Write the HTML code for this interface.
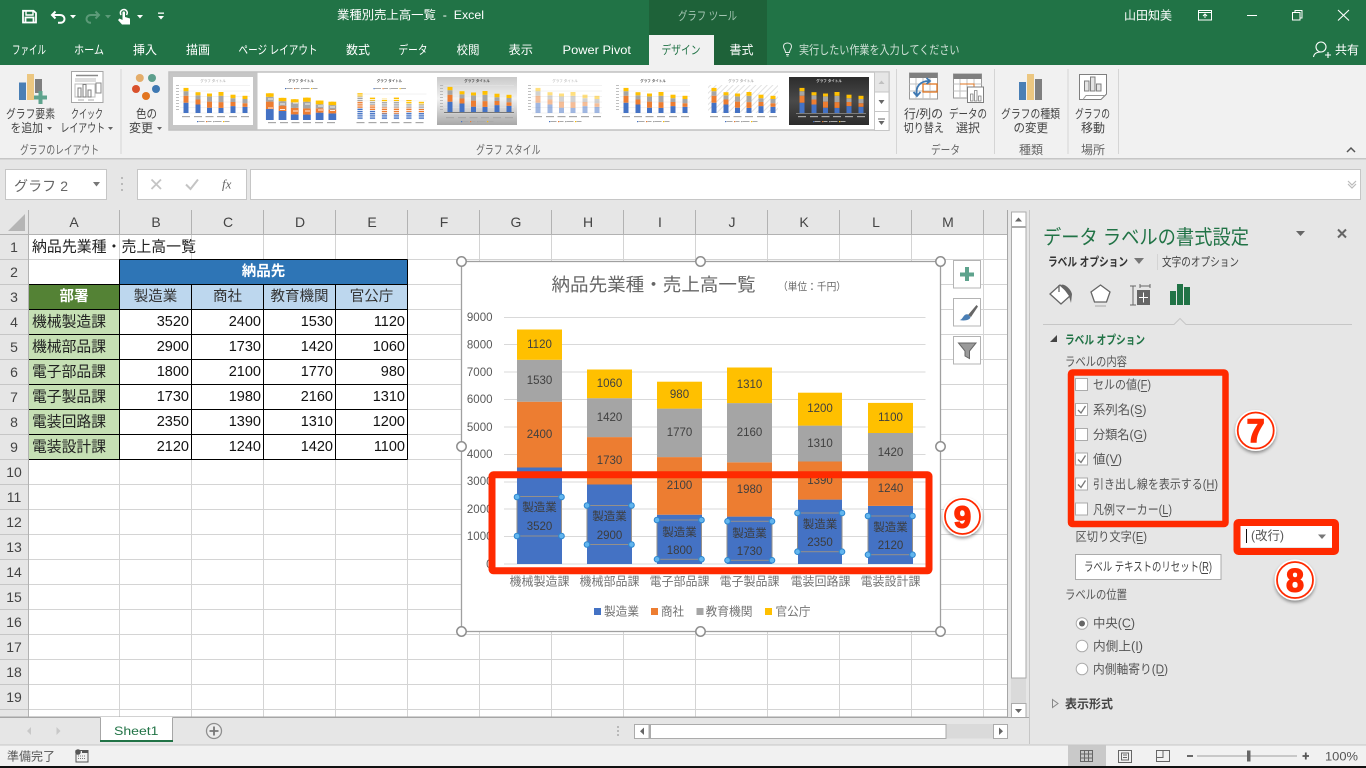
<!DOCTYPE html>
<html lang="ja"><head><meta charset="utf-8"><title>業種別売上高一覧 - Excel</title>
<style>
html,body{margin:0;padding:0;background:#e6e6e6;overflow:hidden}
svg{display:block}
text{font-family:"Liberation Sans","Noto Sans CJK JP",sans-serif;dominant-baseline:central}
.m{text-anchor:middle}.e{text-anchor:end}
</style></head><body>
<svg width="1366" height="768" viewBox="0 0 1366 768" xmlns="http://www.w3.org/2000/svg">
<defs>
<filter id="sh" x="-30%" y="-30%" width="160%" height="170%"><feDropShadow dx="0" dy="2" stdDeviation="1.6" flood-color="#000" flood-opacity=".4"/></filter>
<linearGradient id="gg" x1="0" y1="0" x2="0" y2="1"><stop offset="0" stop-color="#c9c9c9"/><stop offset=".45" stop-color="#f2f2f2"/><stop offset="1" stop-color="#a8a8a8"/></linearGradient>
<linearGradient id="dk" x1="0" y1="0" x2="0" y2="1"><stop offset="0" stop-color="#2c2c2c"/><stop offset=".5" stop-color="#4a4a4a"/><stop offset="1" stop-color="#2c2c2c"/></linearGradient>
<pattern id="hat" width="4" height="4" patternUnits="userSpaceOnUse" patternTransform="rotate(45)"><rect width="4" height="4" fill="#fff"/><rect width="1" height="4" fill="#e2e2e2"/></pattern>
<pattern id="stp" width="4" height="2.200" patternUnits="userSpaceOnUse"><rect width="4" height="2.200" fill="none"/><rect width="4" height=".8" fill="#fff"/></pattern>
<g id="b">
<rect x="10.500" y="25.700" width="5" height="10.300" fill="#4472c4"/><rect x="10.500" y="18.700" width="5" height="7" fill="#ed7d31"/><rect x="10.500" y="14.200" width="5" height="4.500" fill="#a5a5a5"/><rect x="10.500" y="10.900" width="5" height="3.300" fill="#ffc000"/>
<rect x="22.500" y="27.500" width="5" height="8.500" fill="#4472c4"/><rect x="22.500" y="22.500" width="5" height="5" fill="#ed7d31"/><rect x="22.500" y="18.300" width="5" height="4.200" fill="#a5a5a5"/><rect x="22.500" y="15.200" width="5" height="3.100" fill="#ffc000"/>
<rect x="34" y="30.700" width="5" height="5.300" fill="#4472c4"/><rect x="34" y="24.600" width="5" height="6.100" fill="#ed7d31"/><rect x="34" y="19.400" width="5" height="5.200" fill="#a5a5a5"/><rect x="34" y="16.500" width="5" height="2.900" fill="#ffc000"/>
<rect x="45.500" y="30.900" width="5" height="5.100" fill="#4472c4"/><rect x="45.500" y="25.100" width="5" height="5.800" fill="#ed7d31"/><rect x="45.500" y="18.800" width="5" height="6.300" fill="#a5a5a5"/><rect x="45.500" y="15" width="5" height="3.800" fill="#ffc000"/>
<rect x="57.500" y="29.100" width="5" height="6.900" fill="#4472c4"/><rect x="57.500" y="25" width="5" height="4.100" fill="#ed7d31"/><rect x="57.500" y="21.200" width="5" height="3.800" fill="#a5a5a5"/><rect x="57.500" y="17.700" width="5" height="3.500" fill="#ffc000"/>
<rect x="69.500" y="29.800" width="5" height="6.200" fill="#4472c4"/><rect x="69.500" y="26.200" width="5" height="3.600" fill="#ed7d31"/><rect x="69.500" y="22" width="5" height="4.200" fill="#a5a5a5"/><rect x="69.500" y="18.800" width="5" height="3.200" fill="#ffc000"/>
</g>
<g id="gr" stroke="#e6e6e6" stroke-width=".5"><path d="M7 8.500H77M7 14H77M7 19.500H77M7 25H77M7 30.500H77M7 36H77"/><path d="M3 8.500H6M3 11.500H6M3 14.500H6M3 17.500H6M3 20.500H6M3 23.500H6M3 26.500H6M3 29.500H6M3 32.500H6" stroke="#aaa" stroke-width=".8"/></g>
<g id="cl" fill="#a8a8a8"><rect x="9" y="39" width="8" height="1.200"/><rect x="21" y="39" width="8" height="1.200"/><rect x="32.500" y="39" width="8" height="1.200"/><rect x="44" y="39" width="8" height="1.200"/><rect x="56" y="39" width="8" height="1.200"/><rect x="68" y="39" width="8" height="1.200"/></g>
<g id="lg"><rect x="24" y="44" width="1.200" height="1.200" fill="#4472c4"/><rect x="25.500" y="44" width="6" height="1" fill="#aaa"/><rect x="33" y="44" width="1.200" height="1.200" fill="#ed7d31"/><rect x="34.500" y="44" width="4" height="1" fill="#aaa"/><rect x="40" y="44" width="1.200" height="1.200" fill="#a5a5a5"/><rect x="41.500" y="44" width="7" height="1" fill="#aaa"/><rect x="50" y="44" width="1.200" height="1.200" fill="#ffc000"/><rect x="51.500" y="44" width="5" height="1" fill="#aaa"/></g>
<g id="b2"><use href="#b"/><use href="#b" x="2.300"/></g>
</defs>

<!-- Title bar / tabs -->
<rect width="1366" height="65" fill="#217346"/>
<rect x="649" width="118" height="65" fill="#1e6239"/>
<rect x="649" y="35" width="65" height="30" fill="#f1f1f1"/>
<!-- QAT icons -->
<g fill="none" stroke="#fff">
<path d="M23 10.800H33.500L36 13V22.500H23Z" stroke-width="1.800"/>
<path d="M26 11V15H33V11" stroke-width="1.400"/>
<path d="M25.500 22.500V17.500H33.500V22.500" stroke-width="1.800"/>
<path d="M55.500 11.500L52 15L55.500 18.500M52.500 15H60C63 15 64.500 17 64.500 19C64.500 21 63 22.800 60 22.800H58" stroke-width="2"/>
<path d="M95.500 11.500L99 15L95.500 18.500M98.500 15H91C88 15 86.500 17 86.500 19C86.500 21 88 22.800 91 22.800" stroke="#5c9a78" stroke-width="2"/>
<path d="M121 15C119 11 122.500 9.500 124 9.500C126 9.500 128.500 12 126.500 15" stroke-width="1.500"/>
</g>
<path d="M122.500 12.500C122.500 11 125 11 125 12.500V17L130 18.500V24.500H122L118 20L119.500 18.500L122.500 20Z" fill="#fff"/>
<g fill="#fff"><path d="M70 15H76L73 18.500Z"/><path d="M137 15H143L140 18.500Z"/><rect x="158" y="12.500" width="6" height="1.300"/><path d="M158 16H164L161 19.500Z"/></g>
<path d="M105 15H111L108 18.500Z" fill="#5c9a78"/>
<text x="337" y="15" font-size="12" fill="#fff" textLength="147" lengthAdjust="spacingAndGlyphs" xml:space="preserve">業種別売上高一覧  -  Excel</text>
<text x="678" y="16" font-size="12" fill="#a4c5b2" textLength="59" lengthAdjust="spacingAndGlyphs">グラフ ツール</text>
<text x="1124" y="15.500" font-size="12" fill="#fff" textLength="48" lengthAdjust="spacingAndGlyphs">山田知美</text>
<g fill="none" stroke="#fff" stroke-width="1">
<rect x="1198.500" y="10.500" width="13" height="9.500"/><path d="M1198.500 12.500H1211.500M1205 18V14M1203 16L1205 14L1207 16"/>
<path d="M1247 15.500H1257"/>
<path d="M1292.500 12.500H1300V20H1292.500ZM1295 12.500V10.500H1302V18H1300"/>
<path d="M1338 10L1349 20.500M1349 10L1338 20.500" stroke-width="1.100"/>
</g>
<g font-size="12" fill="#fff">
<text x="12" y="50" textLength="34" lengthAdjust="spacingAndGlyphs">ファイル</text>
<text x="74" y="50" textLength="30" lengthAdjust="spacingAndGlyphs">ホーム</text>
<text x="133" y="50" textLength="24" lengthAdjust="spacingAndGlyphs">挿入</text>
<text x="186" y="50" textLength="24" lengthAdjust="spacingAndGlyphs">描画</text>
<text x="238.500" y="50" textLength="79" lengthAdjust="spacingAndGlyphs">ページ レイアウト</text>
<text x="346" y="50" textLength="24" lengthAdjust="spacingAndGlyphs">数式</text>
<text x="398.500" y="50" textLength="29" lengthAdjust="spacingAndGlyphs">データ</text>
<text x="456.500" y="50" textLength="23" lengthAdjust="spacingAndGlyphs">校閲</text>
<text x="508.500" y="50" textLength="24.500" lengthAdjust="spacingAndGlyphs">表示</text>
<text x="562.500" y="50" textLength="68.500" lengthAdjust="spacingAndGlyphs">Power Pivot</text>
<text x="661.500" y="50" textLength="39" lengthAdjust="spacingAndGlyphs" fill="#217346">デザイン</text>
<text x="729.500" y="50" textLength="24" lengthAdjust="spacingAndGlyphs">書式</text>
<text x="799" y="50" textLength="160.500" lengthAdjust="spacingAndGlyphs" fill="#cfe0d6">実行したい作業を入力してください</text>
<text x="1335" y="50" textLength="24" lengthAdjust="spacingAndGlyphs">共有</text>
</g>
<g fill="none" stroke="#dfe9e3" stroke-width="1"><path d="M785.500 52.500C785.500 49.500 783.500 49 783.500 46.500C783.500 44 785.500 43 787.500 43C789.500 43 791.500 44 791.500 46.500C791.500 49 789.500 49.500 789.500 52.500ZM786 54.500H789M786.500 56H788.500"/></g>
<g fill="none" stroke="#fff" stroke-width="1.100"><circle cx="1321" cy="47" r="5"/><path d="M1313.500 57C1314 53.500 1317 52 1321 52M1325 55H1331M1328 52V58"/></g>

<!-- Ribbon -->
<rect y="65" width="1366" height="93" fill="#f1f1f1"/>
<rect y="158" width="1366" height="1.500" fill="#c6c6c6"/>
<rect y="159.500" width="1366" height="50.500" fill="#e6e6e6"/>
<g fill="#d5d5d5"><rect x="120.500" y="69" width="1" height="85"/><rect x="896" y="69" width="1" height="85"/><rect x="994" y="69" width="1" height="85"/><rect x="1067.500" y="69" width="1" height="85"/><rect x="1118" y="69" width="1" height="85"/></g>
<!-- ribbon icons -->
<rect x="19" y="82.500" width="7" height="17.500" fill="#4a7fb5"/><rect x="27" y="74" width="7" height="26" fill="#ecc781"/><rect x="35" y="79" width="7" height="14" fill="#7f7f7f"/>
<path d="M38.500 91H42.500V95.500H47V99.500H42.500V104H38.500V99.500H34V95.500H38.500Z" fill="#5ea38d"/>
<rect x="71.500" y="71.500" width="31.500" height="31" fill="#fff" stroke="#a6a6a6"/>
<path d="M76 75.500H98" stroke="#8a8a8a" stroke-width="1.500"/><path d="M75 79H96M75 81H96" stroke="#bbb"/>
<path d="M75 84H95V97H75Z" fill="#fff" stroke="#bbb"/>
<rect x="78" y="88" width="3" height="9" fill="#fff" stroke="#7f7f7f"/><rect x="83" y="84.500" width="3" height="12.500" fill="#fff" stroke="#7f7f7f"/><rect x="88" y="90" width="3" height="7" fill="#fff" stroke="#7f7f7f"/>
<rect x="96" y="83" width="5" height="10" fill="#fff" stroke="#8a8a8a"/>
<path d="M78 100H84M88 100H94" stroke="#aaa"/>
<circle cx="139.800" cy="78" r="4" fill="#e4ad6a"/><circle cx="152" cy="78" r="4" fill="#5d9f8d"/><circle cx="136" cy="89" r="4" fill="#d9512c"/><circle cx="156" cy="89" r="4" fill="#3e78b2"/><circle cx="146" cy="96" r="4" fill="#e2751f"/>
<g font-size="12" fill="#444">
<text x="6" y="114" textLength="49" lengthAdjust="spacingAndGlyphs">グラフ要素</text>
<text x="10.500" y="128" textLength="32.500" lengthAdjust="spacingAndGlyphs">を追加</text>
<text x="71" y="114" textLength="32" lengthAdjust="spacingAndGlyphs">クイック</text>
<text x="60.500" y="128" textLength="44.500" lengthAdjust="spacingAndGlyphs">レイアウト</text>
<text x="136" y="114" textLength="21" lengthAdjust="spacingAndGlyphs">色の</text>
<text x="129" y="128" textLength="24" lengthAdjust="spacingAndGlyphs">変更</text>
<text x="904" y="114" textLength="39" lengthAdjust="spacingAndGlyphs">行/列の</text>
<text x="903.500" y="128" textLength="40.500" lengthAdjust="spacingAndGlyphs">切り替え</text>
<text x="949" y="114" textLength="38" lengthAdjust="spacingAndGlyphs">データの</text>
<text x="956" y="128" textLength="24" lengthAdjust="spacingAndGlyphs">選択</text>
<text x="1001" y="114" textLength="59" lengthAdjust="spacingAndGlyphs">グラフの種類</text>
<text x="1013.500" y="128" textLength="34.500" lengthAdjust="spacingAndGlyphs">の変更</text>
<text x="1075" y="114" textLength="35" lengthAdjust="spacingAndGlyphs">グラフの</text>
<text x="1081" y="128" textLength="24" lengthAdjust="spacingAndGlyphs">移動</text>
</g>
<g fill="#666"><path d="M47 127H52L49.500 130Z"/><path d="M108 127H113L110.500 130Z"/><path d="M157 127H162L159.500 130Z"/></g>
<g font-size="12" fill="#666">
<text x="20" y="150" textLength="79" lengthAdjust="spacingAndGlyphs">グラフのレイアウト</text>
<text x="476" y="150" textLength="64.500" lengthAdjust="spacingAndGlyphs">グラフ スタイル</text>
<text x="931" y="150" textLength="29" lengthAdjust="spacingAndGlyphs">データ</text>
<text x="1019" y="150" textLength="24" lengthAdjust="spacingAndGlyphs">種類</text>
<text x="1081" y="150" textLength="24" lengthAdjust="spacingAndGlyphs">場所</text>
</g>
<path d="M1347 152L1351 148L1355 152" fill="none" stroke="#555" stroke-width="1.500"/>
<!-- gallery -->
<rect x="169" y="72" width="720" height="58" fill="#fff" stroke="#c0c0c0" stroke-width="1.500"/>
<rect x="169.500" y="72.500" width="88" height="57" fill="#c6c6c6"/>
<g transform="translate(173 77)"><rect width="80" height="48" fill="#fff"/><use href="#gr"/><use href="#b"/><use href="#cl"/><use href="#lg"/><text x="40" y="4" class="m" font-size="3.500" fill="#999">グラフ タイトル</text></g>
<g transform="translate(261 77)"><rect width="80" height="48" fill="#fff"/><g transform="translate(-6.200 4.700) scale(1.060 1.064)"><use href="#b2"/></g><use href="#cl" y="6" x="-2"/><use href="#lg" y="-33"/><text x="40" y="4" class="m" font-size="3.500" font-weight="bold" fill="#555">グラフ タイトル</text>
<path d="M7 30H12M19 31.500H24M32 33H37M44 33H49M57 32H62M69 32.500H74M7 21H12M19 26H24M32 25H37M44 26H49M57 28H62M69 29H74" transform="translate(0 1)" stroke="#fff" stroke-opacity=".85"/></g>
<g transform="translate(349.500 77)"><rect width="80" height="48" fill="#fff"/><path d="M7 17H77M7 24H77M7 31H77M7 38H77" stroke="#e6e6e6" stroke-width=".5"/><g transform="translate(-3 4.600) scale(1.040 1.040)"><use href="#b"/></g><rect x="5" y="15" width="72" height="27" fill="url(#stp)"/><use href="#cl" y="6" x="-2"/><use href="#lg" y="-33"/><text x="40" y="4" class="m" font-size="3.500" font-weight="bold" fill="#555">グラフ タイトル</text></g>
<g transform="translate(437 77)"><rect width="80" height="48" fill="url(#gg)"/><use href="#gr"/><use href="#b" y="-1"/><rect x="7" y="35" width="70" height="1" fill="#777"/><use href="#cl" y="1"/><use href="#lg"/><text x="40" y="4" class="m" font-size="3.500" font-weight="bold" fill="#444">グラフ タイトル</text></g>
<g transform="translate(525 77)"><rect width="80" height="48" fill="#fff"/><use href="#gr"/><use href="#b" opacity=".5"/><use href="#cl"/><use href="#lg"/><text x="40" y="4" class="m" font-size="3.500" fill="#aaa">グラフ タイトル</text></g>
<g transform="translate(613 77)"><rect width="80" height="48" fill="#fff"/><use href="#gr"/><use href="#b"/><use href="#cl"/><use href="#lg"/><text x="40" y="4" class="m" font-size="3.500" font-weight="bold" fill="#555">グラフ タイトル</text></g>
<g transform="translate(701 77)"><rect width="80" height="48" fill="#fff"/><rect x="7" y="8" width="70" height="28" fill="url(#hat)"/><use href="#b"/><use href="#cl"/><use href="#lg"/><text x="40" y="4" class="m" font-size="3.500" font-weight="bold" fill="#aaa">グラフ タイトル</text></g>
<g transform="translate(789 77)"><rect width="80" height="48" fill="url(#dk)"/><use href="#b"/><rect x="7" y="36" width="70" height=".6" fill="#aaa"/><use href="#cl"/><use href="#lg"/><text x="40" y="4" class="m" font-size="3.500" font-weight="bold" fill="#ddd">グラフ タイトル</text></g>
<rect x="874.500" y="72" width="14.500" height="20" fill="#e6e6e6" stroke="#c6c6c6"/><rect x="874.500" y="92" width="14.500" height="19.500" fill="#fff" stroke="#c6c6c6"/><rect x="874.500" y="111.500" width="14.500" height="19" fill="#fff" stroke="#c6c6c6"/>
<path d="M878.500 84L881.500 80.500L884.500 84Z" fill="#c0c0c0"/><path d="M878.500 100H884.500L881.500 104Z" fill="#666"/><path d="M878 118.500H885V119.500H878ZM878.500 121H884.500L881.500 125Z" fill="#666"/>
<!-- data icons -->
<rect x="909.500" y="73" width="28" height="26" fill="#fff" stroke="#999"/><rect x="909.500" y="73" width="28" height="5" fill="#7f7f7f"/>
<path d="M909.500 84H937.500M909.500 91H937.500M916 78V99M923 78V99M930 78V99" stroke="#c2c2c2"/>
<rect x="923" y="84" width="14" height="8" fill="none" stroke="#e2751f" stroke-width="1.300"/>
<path d="M917 95C915 87 920 81 929 81M926.500 78L930 81L926.500 84M913.500 92L917 96L920.500 92" fill="none" stroke="#3e78b2" stroke-width="1.800"/>
<rect x="953.500" y="74" width="28" height="24" fill="#fff" stroke="#999"/><rect x="953.500" y="74" width="28" height="5" fill="#7f7f7f"/>
<path d="M953.500 84H981.500M953.500 91H981.500M960 79V98M967 79V98M974 79V98" stroke="#c2c2c2"/><path d="M960 84H974V98" fill="none" stroke="#e2751f"/>
<path d="M967.500 87H983.500V102.500H967.500Z" fill="#fff" stroke="#7f7f7f"/><path d="M970.500 101V94H973V101ZM974.500 101V90.500H977V101ZM978.500 101V96H981V101Z" fill="#fff" stroke="#7f7f7f" stroke-width=".8"/>
<rect x="1019" y="82" width="7" height="18" fill="#4a7fb5"/><rect x="1027" y="74" width="7" height="26" fill="#ecc781"/><rect x="1035" y="79" width="7" height="21" fill="#7f7f7f"/>
<path d="M1079.500 74.500H1106.500V94L1101 99.500H1079.500Z" fill="#fff" stroke="#7f7f7f"/><path d="M1083 99.500L1086 95.500H1106" fill="none" stroke="#999"/>
<path d="M1084.500 91V81H1089V91ZM1090.500 91V77H1095V91ZM1096.500 91V84H1101V91Z" fill="#e4e4e4" stroke="#7f7f7f"/>

<!-- Formula bar -->
<rect x="5.500" y="169.500" width="101" height="30" fill="#fff" stroke="#c6c6c6"/>
<text x="14" y="186" font-size="14" fill="#666" textLength="54" lengthAdjust="spacing">グラフ 2</text>
<path d="M93 182H100L96.500 186.500Z" fill="#777"/>
<path d="M122 177V179M122 183V185M122 189V191" stroke="#aaa" stroke-width="1.500"/>
<rect x="137.500" y="169.500" width="109" height="30" fill="#fff" stroke="#c6c6c6"/>
<path d="M151.500 179.500L161 189M161 179.500L151.500 189" stroke="#c4c4c4" stroke-width="1.800"/>
<path d="M186 184.500L190.500 189L198 179.500" fill="none" stroke="#c4c4c4" stroke-width="2"/>
<text x="222" y="184" font-size="13" font-style="italic" fill="#666" style="font-family:'Liberation Serif',serif">fx</text>
<rect x="250.500" y="169.500" width="1110" height="30" fill="#fff" stroke="#c6c6c6"/>
<path d="M1348 181L1352 185L1356 181M1348 184L1352 188L1356 184" fill="none" stroke="#bbb" stroke-width="1.200"/>

<!-- Sheet -->
<rect x="0" y="210" width="1030" height="507" fill="#e6e6e6"/>
<rect x="29" y="235" width="979" height="482" fill="#fff"/>
<path d="M191.500 235V717M263.500 235V717M335.500 235V717M407.500 235V717M479.500 235V717M551.500 235V717M623.500 235V717M695.500 235V717M767.500 235V717M839.500 235V717M911.500 235V717M983.500 235V717M119.500 235V717" stroke="#d4d4d4" fill="none"/>
<path d="M29 259.500H1008M29 284.500H1008M29 309.500H1008M29 334.500H1008M29 359.500H1008M29 384.500H1008M29 409.500H1008M29 434.500H1008M29 459.500H1008M29 484.500H1008M29 509.500H1008M29 534.500H1008M29 559.500H1008M29 584.500H1008M29 609.500H1008M29 634.500H1008M29 659.500H1008M29 684.500H1008M29 709.500H1008" stroke="#d4d4d4" fill="none"/>
<path d="M0 234.500H1008M28.500 210V717M119.500 210V234M191.500 210V234M263.500 210V234M335.500 210V234M407.500 210V234M479.500 210V234M551.500 210V234M623.500 210V234M695.500 210V234M767.500 210V234M839.500 210V234M911.500 210V234M983.500 210V234" stroke="#b2b2b2" fill="none"/>
<path d="M0 259.500H28M0 284.500H28M0 309.500H28M0 334.500H28M0 359.500H28M0 384.500H28M0 409.500H28M0 434.500H28M0 459.500H28M0 484.500H28M0 509.500H28M0 534.500H28M0 559.500H28M0 584.500H28M0 609.500H28M0 634.500H28M0 659.500H28M0 684.500H28M0 709.500H28" stroke="#c6c6c6" fill="none"/>
<path d="M25 214V231H8Z" fill="#b5b5b5"/>
<g font-size="14" fill="#444" style="text-anchor:middle">
<text x="74" y="222">A</text><text x="156" y="222">B</text><text x="228" y="222">C</text><text x="300" y="222">D</text><text x="372" y="222">E</text><text x="444" y="222">F</text><text x="516" y="222">G</text><text x="588" y="222">H</text><text x="660" y="222">I</text><text x="732" y="222">J</text><text x="804" y="222">K</text><text x="876" y="222">L</text><text x="948" y="222">M</text>
<text x="14" y="247">1</text><text x="14" y="272">2</text><text x="14" y="297">3</text><text x="14" y="322">4</text><text x="14" y="347">5</text><text x="14" y="372">6</text><text x="14" y="397">7</text><text x="14" y="422">8</text><text x="14" y="447">9</text><text x="14" y="472">10</text><text x="14" y="497">11</text><text x="14" y="522">12</text><text x="14" y="547">13</text><text x="14" y="572">14</text><text x="14" y="597">15</text><text x="14" y="622">16</text><text x="14" y="647">17</text><text x="14" y="672">18</text><text x="14" y="697">19</text><text x="14" y="722">20</text>
</g>
<!-- Table -->
<rect x="119.500" y="259.500" width="288" height="25" fill="#2e75b6"/>
<rect x="29" y="284.500" width="90.500" height="25" fill="#548235"/>
<rect x="119.500" y="284.500" width="288" height="25" fill="#bdd7ee"/>
<rect x="29" y="309.500" width="90.500" height="150" fill="#c6e0b4"/>
<rect x="119.500" y="309.500" width="288" height="150" fill="#fff"/>
<path d="M119.500 259.500H407.500M29 284.500H407.500M29 309.500H407.500M29 334.500H407.500M29 359.500H407.500M29 384.500H407.500M29 409.500H407.500M29 434.500H407.500M29 459.500H407.500M119.500 259.500V459.500M407.500 259.500V459.500M191.500 284.500V459.500M263.500 284.500V459.500M335.500 284.500V459.500" stroke="#000" fill="none"/>
<text x="32" y="247" font-size="15" fill="#222" textLength="164" lengthAdjust="spacingAndGlyphs">納品先業種・売上高一覧</text>
<text x="263.500" y="272" class="m" font-size="14.500" font-weight="bold" fill="#fff">納品先</text>
<text x="74" y="297" class="m" font-size="14.500" font-weight="bold" fill="#fff">部署</text>
<g font-size="14.500" fill="#333" style="text-anchor:middle"><text x="155.500" y="297">製造業</text><text x="227.500" y="297">商社</text><text x="299.500" y="297">教育機関</text><text x="371.500" y="297">官公庁</text></g>
<g font-size="15" fill="#222">
<text x="32" y="322" textLength="74" lengthAdjust="spacingAndGlyphs">機械製造課</text><text x="32" y="347" textLength="74" lengthAdjust="spacingAndGlyphs">機械部品課</text><text x="32" y="372" textLength="74" lengthAdjust="spacingAndGlyphs">電子部品課</text><text x="32" y="397" textLength="74" lengthAdjust="spacingAndGlyphs">電子製品課</text><text x="32" y="422" textLength="74" lengthAdjust="spacingAndGlyphs">電装回路課</text><text x="32" y="447" textLength="74" lengthAdjust="spacingAndGlyphs">電装設計課</text>
</g>
<g font-size="14.500" fill="#111" style="text-anchor:end">
<text x="189" y="322">3520</text><text x="261" y="322">2400</text><text x="333" y="322">1530</text><text x="405" y="322">1120</text>
<text x="189" y="347">2900</text><text x="261" y="347">1730</text><text x="333" y="347">1420</text><text x="405" y="347">1060</text>
<text x="189" y="372">1800</text><text x="261" y="372">2100</text><text x="333" y="372">1770</text><text x="405" y="372">980</text>
<text x="189" y="397">1730</text><text x="261" y="397">1980</text><text x="333" y="397">2160</text><text x="405" y="397">1310</text>
<text x="189" y="422">2350</text><text x="261" y="422">1390</text><text x="333" y="422">1310</text><text x="405" y="422">1200</text>
<text x="189" y="447">2120</text><text x="261" y="447">1240</text><text x="333" y="447">1420</text><text x="405" y="447">1100</text>
</g>

<!-- Chart -->
<rect x="461.500" y="261.500" width="479" height="370" fill="#fff" stroke="#a0a0a0" stroke-width="1.300"/>
<text x="551.500" y="285" font-size="18" fill="#666" textLength="204" lengthAdjust="spacingAndGlyphs">納品先業種・売上高一覧</text>
<text x="778" y="287" font-size="10.500" fill="#666" textLength="68" lengthAdjust="spacingAndGlyphs">（単位：千円）</text>
<path d="M504 317.500H925.500M504 344.500H925.500M504 372H925.500M504 399.500H925.500M504 427H925.500M504 454.500H925.500M504 482H925.500M504 509H925.500M504 536.500H925.500M504 564H925.500" stroke="#d9d9d9" fill="none"/>
<g font-size="11.500" fill="#595959" style="text-anchor:end"><text x="492.500" y="318">9000</text><text x="492.500" y="345.500">8000</text><text x="492.500" y="373">7000</text><text x="492.500" y="400">6000</text><text x="492.500" y="428">5000</text><text x="492.500" y="455">4000</text><text x="492.500" y="482">3000</text><text x="492.500" y="510">2000</text><text x="492.500" y="537">1000</text><text x="492.500" y="565">0</text></g>
<g fill="#4472c4"><rect x="517" y="467.500" width="45" height="96.500"/><rect x="587" y="484.500" width="45" height="79.500"/><rect x="657" y="514.700" width="45" height="49.300"/><rect x="727" y="516.600" width="45" height="47.400"/><rect x="798" y="499.600" width="44" height="64.400"/><rect x="868" y="505.900" width="45" height="58.100"/></g>
<g fill="#ed7d31"><rect x="517" y="401.700" width="45" height="65.800"/><rect x="587" y="437.100" width="45" height="47.400"/><rect x="657" y="457.100" width="45" height="57.600"/><rect x="727" y="462.300" width="45" height="54.300"/><rect x="798" y="461.500" width="44" height="38.100"/><rect x="868" y="471.900" width="45" height="34"/></g>
<g fill="#a5a5a5"><rect x="517" y="359.800" width="45" height="41.900"/><rect x="587" y="398.200" width="45" height="38.900"/><rect x="657" y="408.600" width="45" height="48.500"/><rect x="727" y="403.100" width="45" height="59.200"/><rect x="798" y="425.600" width="44" height="35.900"/><rect x="868" y="433" width="45" height="38.900"/></g>
<g fill="#ffc000"><rect x="517" y="329.500" width="45" height="30.300"/><rect x="587" y="369.500" width="45" height="28.700"/><rect x="657" y="381.700" width="45" height="26.900"/><rect x="727" y="367.500" width="45" height="35.600"/><rect x="798" y="392.700" width="44" height="32.900"/><rect x="868" y="402.900" width="45" height="30.100"/></g>
<g font-size="11.500" fill="#404040" style="text-anchor:middle">
<text x="539.500" y="345">1120</text><text x="539.500" y="381">1530</text><text x="539.500" y="435">2400</text>
<text x="609.500" y="384">1060</text><text x="609.500" y="418">1420</text><text x="609.500" y="461">1730</text>
<text x="679.500" y="395">980</text><text x="679.500" y="433">1770</text><text x="679.500" y="486">2100</text>
<text x="749.500" y="385">1310</text><text x="749.500" y="433">2160</text><text x="749.500" y="490">1980</text>
<text x="820" y="409">1200</text><text x="820" y="444">1310</text><text x="820" y="481">1390</text>
<text x="890.500" y="418">1100</text><text x="890.500" y="453">1420</text><text x="890.500" y="489">1240</text>
</g>
<g fill="none" stroke="#95908a" stroke-width="1"><rect x="517" y="496.500" width="44.500" height="39.500"/><rect x="587" y="505.500" width="44.500" height="39"/><rect x="657" y="520" width="44.500" height="39.300"/><rect x="727" y="521.300" width="45" height="39"/><rect x="797.500" y="513" width="44.500" height="38.700"/><rect x="868" y="516" width="44.500" height="38.700"/></g>
<g font-size="11.500" fill="#3c3c3c" style="text-anchor:middle">
<text x="539.500" y="508">製造業</text><text x="539.500" y="527">3520</text>
<text x="609.500" y="517">製造業</text><text x="609.500" y="536">2900</text>
<text x="679.500" y="533">製造業</text><text x="679.500" y="551">1800</text>
<text x="749.500" y="534">製造業</text><text x="749.500" y="552">1730</text>
<text x="820" y="525">製造業</text><text x="820" y="543">2350</text>
<text x="890.500" y="528">製造業</text><text x="890.500" y="546">2120</text>
</g>
<g fill="#63b5ee" stroke="#2b86cf" stroke-width="1">
<circle cx="517" cy="497" r="2.800"/><circle cx="561.500" cy="497" r="2.800"/><circle cx="517" cy="536" r="2.800"/><circle cx="561.500" cy="536" r="2.800"/>
<circle cx="587" cy="505.500" r="2.800"/><circle cx="631.500" cy="505.500" r="2.800"/><circle cx="587" cy="544.500" r="2.800"/><circle cx="631.500" cy="544.500" r="2.800"/>
<circle cx="657" cy="520" r="2.800"/><circle cx="701.500" cy="520" r="2.800"/><circle cx="657" cy="559.300" r="2.800"/><circle cx="701.500" cy="559.300" r="2.800"/>
<circle cx="727.500" cy="521.300" r="2.800"/><circle cx="772" cy="521.300" r="2.800"/><circle cx="727.500" cy="560.300" r="2.800"/><circle cx="772" cy="560.300" r="2.800"/>
<circle cx="797.500" cy="513" r="2.800"/><circle cx="842" cy="513" r="2.800"/><circle cx="797.500" cy="551.700" r="2.800"/><circle cx="842" cy="551.700" r="2.800"/>
<circle cx="868" cy="516" r="2.800"/><circle cx="912.500" cy="516" r="2.800"/><circle cx="868" cy="554.700" r="2.800"/><circle cx="912.500" cy="554.700" r="2.800"/>
</g>
<g font-size="12" fill="#737373">
<text x="509.500" y="581.500" textLength="60" lengthAdjust="spacingAndGlyphs">機械製造課</text><text x="579.500" y="581.500" textLength="60" lengthAdjust="spacingAndGlyphs">機械部品課</text><text x="649.500" y="581.500" textLength="60" lengthAdjust="spacingAndGlyphs">電子部品課</text><text x="719.500" y="581.500" textLength="60" lengthAdjust="spacingAndGlyphs">電子製品課</text><text x="790.500" y="581.500" textLength="60" lengthAdjust="spacingAndGlyphs">電装回路課</text><text x="860.500" y="581.500" textLength="60" lengthAdjust="spacingAndGlyphs">電装設計課</text>
<text x="604" y="611.500" textLength="35" lengthAdjust="spacingAndGlyphs">製造業</text><text x="661" y="611.500" textLength="23" lengthAdjust="spacingAndGlyphs">商社</text><text x="705.500" y="611.500" textLength="47" lengthAdjust="spacingAndGlyphs">教育機関</text><text x="775.500" y="611.500" textLength="35" lengthAdjust="spacingAndGlyphs">官公庁</text>
</g>
<rect x="594" y="608" width="7" height="7" fill="#4472c4"/><rect x="651" y="608" width="7" height="7" fill="#ed7d31"/><rect x="696.500" y="608" width="7" height="7" fill="#a5a5a5"/><rect x="765" y="608" width="7" height="7" fill="#ffc000"/>
<g fill="#fff" stroke="#8e8e8e" stroke-width="1.500"><circle cx="461.500" cy="261.500" r="4.700"/><circle cx="700.500" cy="261.500" r="4.700"/><circle cx="940.500" cy="261.500" r="4.700"/><circle cx="461.500" cy="446.500" r="4.700"/><circle cx="940.500" cy="446.500" r="4.700"/><circle cx="461.500" cy="631.500" r="4.700"/><circle cx="700.500" cy="631.500" r="4.700"/><circle cx="940.500" cy="631.500" r="4.700"/></g>
<!-- chart side buttons -->
<g fill="#fff" stroke="#b4b4b4"><rect x="953.500" y="260.500" width="27" height="27.500"/><rect x="953.500" y="298.500" width="27" height="27.500"/><rect x="953.500" y="336.500" width="27" height="27.500"/></g>
<path d="M965 267H969V272.500H974V276.500H969V281H965V276.500H960V272.500H965Z" fill="#5ea38d"/>
<path d="M968 315L976.500 305L978 306.500L971 317Z" fill="#666"/><path d="M959.500 320C963 320 963.500 313 968 314.500L970.500 317C970 320.500 964 321 959.500 320Z" fill="#4a7fb5"/>
<path d="M958.500 343H976L969.500 351V358.500L965 356V351Z" fill="#9a9a9a" stroke="#666"/>

<!-- Red box 9 -->
<rect x="492" y="474.800" width="437" height="96" rx="1.500" fill="none" stroke="#ff2a00" stroke-width="7"/>

<!-- Vertical scrollbar & sheet edges -->
<path d="M1007.500 210V717M0 717H1008" stroke="#a6a6a6" fill="none"/>
<rect x="1011" y="227" width="15" height="476" fill="#dadada"/>
<rect x="1011.500" y="212" width="14.500" height="14.500" fill="#fff" stroke="#ababab"/>
<rect x="1011.500" y="226.500" width="14.500" height="451.500" fill="#fff" stroke="#ababab"/>
<rect x="1011" y="226" width="15" height="2" fill="#ababab"/>
<rect x="1011.500" y="703.500" width="14.500" height="14" fill="#fff" stroke="#ababab"/>
<path d="M1015 221.500H1022L1018.500 217.500Z" fill="#666"/><path d="M1015 709H1022L1018.500 713Z" fill="#666"/>
<rect x="1029" y="210" width="1" height="534" fill="#c6c6c6"/>

<!-- Tab bar -->
<rect x="0" y="717.500" width="1029" height="27" fill="#e6e6e6"/>
<rect y="717" width="1029" height="1" fill="#a6a6a6"/>
<rect x="100.500" y="717" width="72" height="24" fill="#fff"/>
<path d="M100.500 717.500V741M172.500 717.500V741" stroke="#a6a6a6"/>
<rect x="100" y="740" width="73" height="2" fill="#217346"/>
<text x="114" y="731" font-size="12" fill="#217346" textLength="44.500" lengthAdjust="spacingAndGlyphs">Sheet1</text>
<path d="M31 727V735L27 731Z" fill="#c8c8c8"/><path d="M56.500 727V735L60.500 731Z" fill="#c8c8c8"/>
<circle cx="214" cy="731" r="7.500" fill="#ececec" stroke="#8f8f8f" stroke-width="1.300"/><path d="M214 726.500V735.500M209.500 731H218.500" stroke="#777" stroke-width="1.800"/>
<path d="M618 726V728M618 730V732M618 734V736" stroke="#aaa" stroke-width="1.500"/>
<rect x="634" y="724" width="373" height="14.500" fill="#dadada"/>
<rect x="634.500" y="724.500" width="14.500" height="14" fill="#fff" stroke="#ababab"/>
<rect x="649.500" y="724.500" width="296.500" height="14" fill="#fff" stroke="#ababab"/><rect x="649" y="724" width="2" height="15" fill="#ababab"/>
<rect x="993.500" y="724.500" width="14" height="14" fill="#fff" stroke="#ababab"/>
<path d="M644 727.500V735L640 731.200Z" fill="#666"/><path d="M999 727.500V735L1003 731.200Z" fill="#666"/>

<!-- Task pane -->
<rect x="1030" y="210" width="336" height="535" fill="#e6e6e6"/>
<text x="1043" y="238" font-size="20" fill="#217346" textLength="206" lengthAdjust="spacingAndGlyphs">データ ラベルの書式設定</text>
<path d="M1296 231H1305L1300.500 236Z" fill="#666"/>
<path d="M1338 229.500L1346 237.500M1346 229.500L1338 237.500" stroke="#666" stroke-width="2"/>
<text x="1048" y="262" font-size="12" font-weight="bold" fill="#333" textLength="80" lengthAdjust="spacingAndGlyphs">ラベル オプション</text>
<path d="M1134 258H1144L1139 264Z" fill="#777"/>
<rect x="1157" y="254" width="1" height="16" fill="#d4d4d4"/>
<text x="1162" y="262" font-size="12" fill="#444" textLength="77" lengthAdjust="spacingAndGlyphs">文字のオプション</text>
<!-- pane icons -->
<path d="M1060 285L1071 295L1061 304L1050 294Z" fill="#fff" stroke="#666" stroke-width="1.300"/><path d="M1061 285C1064 283 1071 289 1072 294L1071 303L1069 296" fill="#666"/><path d="M1059 285V292" stroke="#666" stroke-width="1.300"/>
<path d="M1100.500 285L1110 292L1106.500 302H1094.500L1091 292Z" fill="#fff" stroke="#666" stroke-width="1.300"/><path d="M1095 306H1106" stroke="#bbb" stroke-width="1.500"/>
<path d="M1130 286H1136M1133 286V305M1130 305H1136M1140 286H1150" stroke="#666" fill="none"/><path d="M1140 284V288M1150 284V288" stroke="#666"/>
<rect x="1137" y="290" width="13" height="15" fill="#666"/><path d="M1143.500 292.500V302.500M1139 297.500H1148" stroke="#fff"/>
<g fill="#217346"><rect x="1170" y="291" width="6" height="14"/><rect x="1177" y="284" width="6" height="21"/><rect x="1184" y="287" width="6" height="18"/></g>
<path d="M1043 324.500H1174L1180 318.500L1186 324.500H1352" fill="none" stroke="#c6c6c6"/>
<path d="M1057 335V342H1050Z" fill="#444"/>
<text x="1065" y="340" font-size="12" font-weight="bold" fill="#217346" textLength="80" lengthAdjust="spacingAndGlyphs">ラベル オプション</text>
<text x="1065" y="362" font-size="12.500" fill="#555" textLength="62" lengthAdjust="spacingAndGlyphs">ラベルの内容</text>
<g fill="#fff" stroke="#ababab"><rect x="1075.500" y="378.500" width="12" height="12"/><rect x="1075.500" y="403.500" width="12" height="12"/><rect x="1075.500" y="428.500" width="12" height="12"/><rect x="1075.500" y="453" width="12" height="12"/><rect x="1075.500" y="478" width="12" height="12"/><rect x="1075.500" y="503" width="12" height="12"/></g>
<path d="M1078 410L1081 413L1085.500 406M1078 459.500L1081 462.500L1085.500 455.500M1078 484.500L1081 487.500L1085.500 480.500" fill="none" stroke="#777" stroke-width="1.300"/>
<g font-size="12.500" fill="#555">
<text x="1093" y="385" textLength="58" lengthAdjust="spacingAndGlyphs">セルの値(F)</text>
<text x="1093" y="410" textLength="53.500" lengthAdjust="spacingAndGlyphs">系列名(S)</text>
<text x="1093" y="435" textLength="54" lengthAdjust="spacingAndGlyphs">分類名(G)</text>
<text x="1093" y="459.500" textLength="29" lengthAdjust="spacingAndGlyphs">値(V)</text>
<text x="1093" y="484.500" textLength="125" lengthAdjust="spacingAndGlyphs">引き出し線を表示する(H)</text>
<text x="1093" y="510" textLength="79" lengthAdjust="spacingAndGlyphs">凡例マーカー(L)</text>
<text x="1075.500" y="537" textLength="71.500" lengthAdjust="spacingAndGlyphs">区切り文字(E)</text>
<text x="1065" y="595" textLength="62" lengthAdjust="spacingAndGlyphs">ラベルの位置</text>
<text x="1093" y="623.500" textLength="42" lengthAdjust="spacingAndGlyphs">中央(C)</text>
<text x="1093" y="646.500" textLength="50" lengthAdjust="spacingAndGlyphs">内側上(I)</text>
<text x="1093" y="669.500" textLength="75" lengthAdjust="spacingAndGlyphs">内側軸寄り(D)</text>
</g>
<path d="M1141 391.500H1147M1136.500 416.500H1142.500M1136 441.500H1143M1111 465.500H1118M1207 490.500H1214M1162 516.500H1168M1137 543.500H1143M1125 629.500H1131M1137 652.500H1140M1158 675.500H1164" stroke="#555" fill="none"/>
<rect x="1240" y="526" width="92" height="21" fill="#fff"/>
<rect x="1246" y="529" width="1" height="14" fill="#111"/>
<text x="1251" y="536" font-size="12.500" fill="#555" textLength="33" lengthAdjust="spacingAndGlyphs">(改行)</text>
<path d="M1318 534.500H1326L1322 539Z" fill="#777"/>
<rect x="1075.500" y="554.500" width="145.500" height="25" fill="#fff" stroke="#ababab"/>
<text x="1084" y="567" font-size="12.500" fill="#444" textLength="128" lengthAdjust="spacingAndGlyphs">ラベル テキストのリセット(R)</text>
<path d="M1201.500 573.500H1208" stroke="#444" fill="none"/>
<g fill="#fff" stroke="#ababab"><circle cx="1082" cy="623.500" r="5.800"/><circle cx="1082" cy="646" r="5.800"/><circle cx="1082" cy="669" r="5.800"/></g>
<circle cx="1082" cy="623.500" r="3" fill="#666"/>
<path d="M1052.500 699.500L1058 703.500L1052.500 707.500Z" fill="none" stroke="#888"/>
<text x="1065" y="704" font-size="12" font-weight="bold" fill="#444" textLength="48" lengthAdjust="spacingAndGlyphs">表示形式</text>
<!-- red boxes 7, 8 -->
<rect x="1071" y="372.500" width="154.500" height="151.500" rx="1.500" fill="none" stroke="#ff2a00" stroke-width="6.500"/>
<rect x="1237" y="522.500" width="98.500" height="29" rx="1.500" fill="none" stroke="#ff2a00" stroke-width="7"/>
<!-- circled numbers -->
<g filter="url(#sh)"><circle cx="1255.700" cy="430.500" r="20.500" fill="#fff"/></g>
<circle cx="1255.700" cy="430.500" r="18" fill="none" stroke="#ff2a00" stroke-width="1.800"/>
<text x="1255.700" y="431" class="m" font-size="32" font-weight="bold" fill="#ff2a00" stroke="#ff2a00" stroke-width="1.500">7</text>
<g filter="url(#sh)"><circle cx="1295" cy="580" r="20.500" fill="#fff"/></g>
<circle cx="1295" cy="580" r="18" fill="none" stroke="#ff2a00" stroke-width="1.800"/>
<text x="1295" y="580.500" class="m" font-size="32" font-weight="bold" fill="#ff2a00" stroke="#ff2a00" stroke-width="1.500">8</text>
<g filter="url(#sh)"><circle cx="962.500" cy="516.500" r="20" fill="#fff"/></g>
<circle cx="962.500" cy="516.500" r="17.500" fill="none" stroke="#ff2a00" stroke-width="1.800"/>
<text x="962.500" y="517" class="m" font-size="31" font-weight="bold" fill="#ff2a00" stroke="#ff2a00" stroke-width="1.500">9</text>

<!-- Status bar -->
<rect y="745" width="1366" height="21" fill="#f1f1f1"/>
<rect y="744.500" width="1366" height="1" fill="#c6c6c6"/>
<rect y="766" width="1366" height="2" fill="#111"/>
<text x="7" y="756.500" font-size="12" fill="#555" textLength="48" lengthAdjust="spacingAndGlyphs">準備完了</text>
<circle cx="78" cy="752" r="2.800" fill="#555"/><rect x="76" y="750.500" width="12" height="11.500" fill="none" stroke="#555"/><rect x="82" y="750" width="6" height="3" fill="#555"/><path d="M78 756H86M78 758.500H86" stroke="#777" stroke-dasharray="1 1"/>
<rect x="1068" y="745.500" width="38" height="20.500" fill="#c9c9c9"/>
<g fill="none" stroke="#666"><rect x="1080.500" y="750.500" width="12" height="11"/><path d="M1080.500 754H1092.500M1080.500 758H1092.500M1084.500 750.500V761.500M1088.500 750.500V761.500"/>
<rect x="1118.500" y="750.500" width="13" height="12"/><rect x="1121.500" y="753" width="7" height="7"/><path d="M1123 755H1127M1123 757.500H1127"/>
<path d="M1156.500 750.500H1169.500V761.500H1156.500ZM1156.500 757.500H1163V750.500"/></g>
<path d="M1187 756H1193M1302.500 756H1309M1305.800 752.500V759.500" stroke="#555" stroke-width="1.800"/>
<path d="M1197 756H1297" stroke="#a0a0a0"/><rect x="1247" y="750.500" width="3.500" height="11" fill="#666"/>
<text x="1325" y="756.500" font-size="12" fill="#555" textLength="33" lengthAdjust="spacingAndGlyphs">100%</text>
</svg>
</body></html>
